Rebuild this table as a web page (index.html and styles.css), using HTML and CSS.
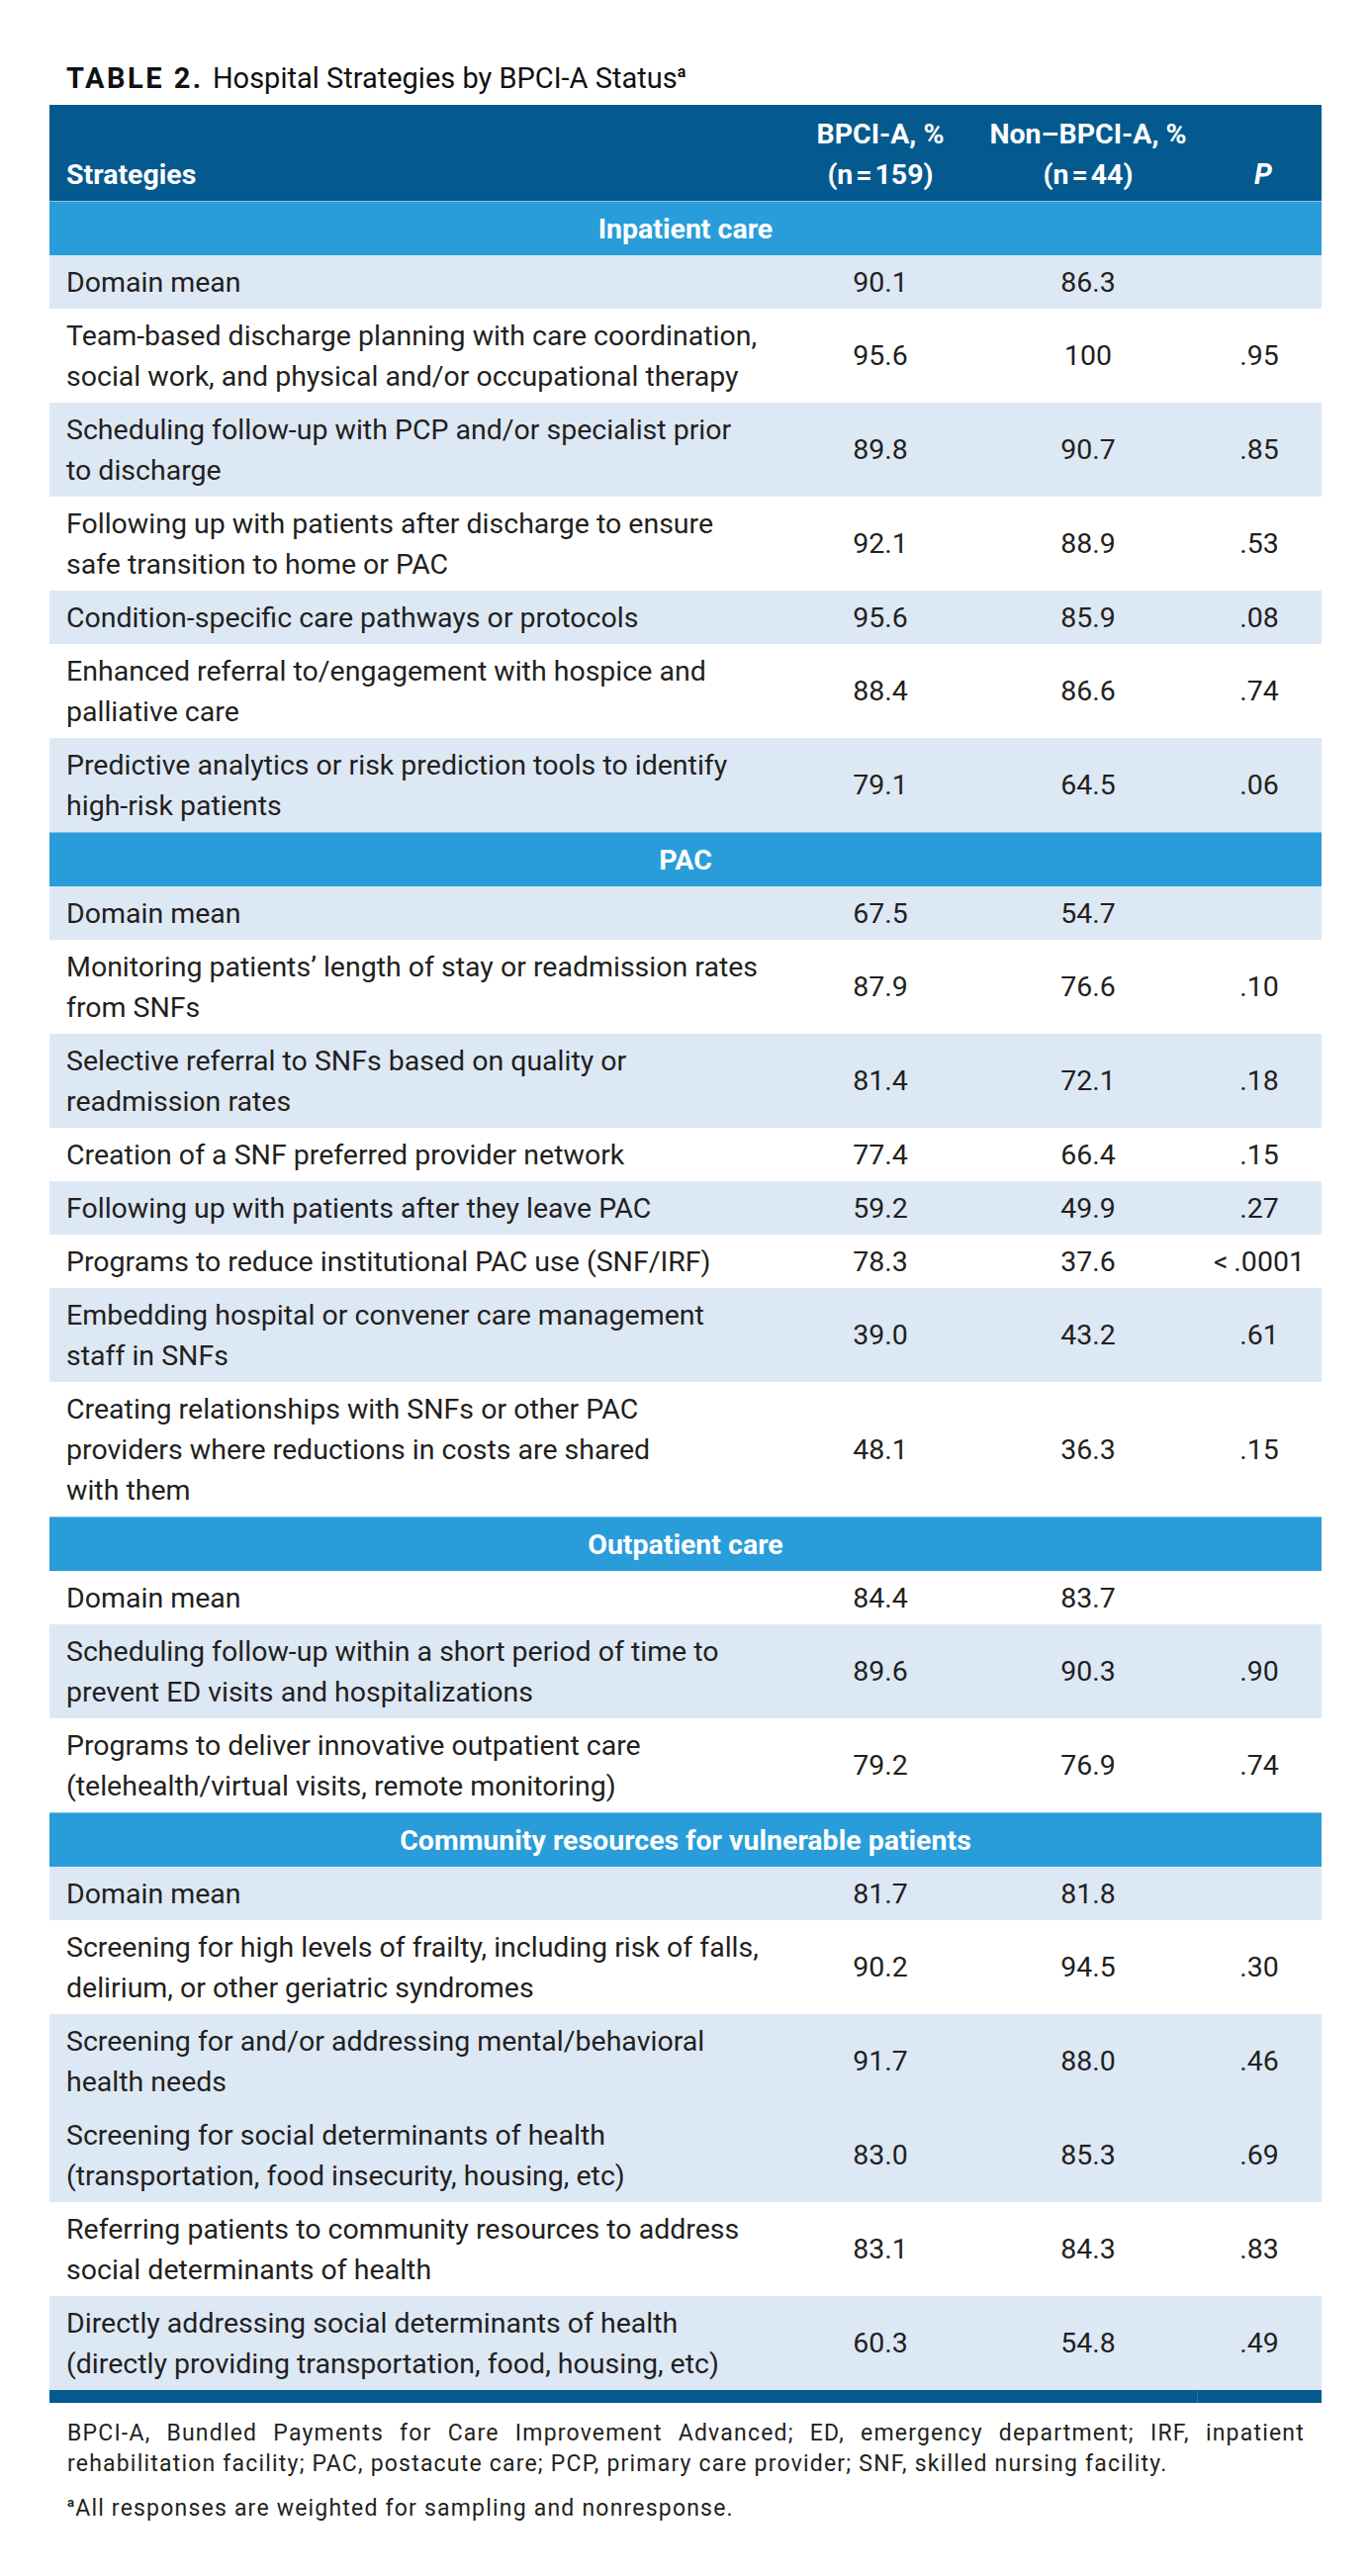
FILE: index.html
```html
<!DOCTYPE html>
<html lang="en">
<head>
<meta charset="utf-8">
<title>Table 2. Hospital Strategies by BPCI-A Status</title>
<link rel="stylesheet" href="styles.css">
</head>
<body>
<div class="page">
  <h1 class="title"><span class="label">TABLE 2.</span> Hospital Strategies by BPCI-A Status<sup>a</sup></h1>
  <table class="strat">
    <colgroup>
      <col class="c-name">
      <col class="c-bpci">
      <col class="c-non">
      <col class="c-p">
    </colgroup>
    <thead>
      <tr class="head">
        <th class="name">Strategies</th>
        <th class="num">BPCI-A, %<br>(n&#8202;=&#8202;159)</th>
        <th class="num">Non–BPCI-A, %<br>(n&#8202;=&#8202;44)</th>
        <th class="num p"><i>P</i></th>
      </tr>
    </thead>
    <tbody>
      <tr class="section"><td colspan="4">Inpatient care</td></tr>
      <tr class="alt"><td class="name">Domain mean</td><td class="num">90.1</td><td class="num">86.3</td><td class="num"></td></tr>
      <tr><td class="name">Team-based discharge planning with care coordination,<br>social work, and physical and/or occupational therapy</td><td class="num">95.6</td><td class="num">100</td><td class="num">.95</td></tr>
      <tr class="alt"><td class="name">Scheduling follow-up with PCP and/or specialist prior<br>to discharge</td><td class="num">89.8</td><td class="num">90.7</td><td class="num">.85</td></tr>
      <tr><td class="name">Following up with patients after discharge to ensure<br>safe transition to home or PAC</td><td class="num">92.1</td><td class="num">88.9</td><td class="num">.53</td></tr>
      <tr class="alt"><td class="name">Condition-specific care pathways or protocols</td><td class="num">95.6</td><td class="num">85.9</td><td class="num">.08</td></tr>
      <tr><td class="name">Enhanced referral to/engagement with hospice and<br>palliative care</td><td class="num">88.4</td><td class="num">86.6</td><td class="num">.74</td></tr>
      <tr class="alt"><td class="name">Predictive analytics or risk prediction tools to identify<br>high-risk patients</td><td class="num">79.1</td><td class="num">64.5</td><td class="num">.06</td></tr>

      <tr class="section"><td colspan="4">PAC</td></tr>
      <tr class="alt"><td class="name">Domain mean</td><td class="num">67.5</td><td class="num">54.7</td><td class="num"></td></tr>
      <tr><td class="name">Monitoring patients’ length of stay or readmission rates<br>from SNFs</td><td class="num">87.9</td><td class="num">76.6</td><td class="num">.10</td></tr>
      <tr class="alt"><td class="name">Selective referral to SNFs based on quality or<br>readmission rates</td><td class="num">81.4</td><td class="num">72.1</td><td class="num">.18</td></tr>
      <tr><td class="name">Creation of a SNF preferred provider network</td><td class="num">77.4</td><td class="num">66.4</td><td class="num">.15</td></tr>
      <tr class="alt"><td class="name">Following up with patients after they leave PAC</td><td class="num">59.2</td><td class="num">49.9</td><td class="num">.27</td></tr>
      <tr><td class="name">Programs to reduce institutional PAC use (SNF/IRF)</td><td class="num">78.3</td><td class="num">37.6</td><td class="num">&lt;&#8201;.0001</td></tr>
      <tr class="alt"><td class="name">Embedding hospital or convener care management<br>staff in SNFs</td><td class="num">39.0</td><td class="num">43.2</td><td class="num">.61</td></tr>
      <tr><td class="name">Creating relationships with SNFs or other PAC<br>providers where reductions in costs are shared<br>with them</td><td class="num">48.1</td><td class="num">36.3</td><td class="num">.15</td></tr>

      <tr class="section"><td colspan="4">Outpatient care</td></tr>
      <tr><td class="name">Domain mean</td><td class="num">84.4</td><td class="num">83.7</td><td class="num"></td></tr>
      <tr class="alt"><td class="name">Scheduling follow-up within a short period of time to<br>prevent ED visits and hospitalizations</td><td class="num">89.6</td><td class="num">90.3</td><td class="num">.90</td></tr>
      <tr><td class="name">Programs to deliver innovative outpatient care<br>(telehealth/virtual visits, remote monitoring)</td><td class="num">79.2</td><td class="num">76.9</td><td class="num">.74</td></tr>

      <tr class="section"><td colspan="4">Community resources for vulnerable patients</td></tr>
      <tr class="alt"><td class="name">Domain mean</td><td class="num">81.7</td><td class="num">81.8</td><td class="num"></td></tr>
      <tr><td class="name">Screening for high levels of frailty, including risk of falls,<br>delirium, or other geriatric syndromes</td><td class="num">90.2</td><td class="num">94.5</td><td class="num">.30</td></tr>
      <tr class="alt"><td class="name">Screening for and/or addressing mental/behavioral<br>health needs</td><td class="num">91.7</td><td class="num">88.0</td><td class="num">.46</td></tr>
      <tr class="alt"><td class="name">Screening for social determinants of health<br>(transportation, food insecurity, housing, etc)</td><td class="num">83.0</td><td class="num">85.3</td><td class="num">.69</td></tr>
      <tr><td class="name">Referring patients to community resources to address<br>social determinants of health</td><td class="num">83.1</td><td class="num">84.3</td><td class="num">.83</td></tr>
      <tr class="alt"><td class="name">Directly addressing social determinants of health<br>(directly providing transportation, food, housing, etc)</td><td class="num">60.3</td><td class="num">54.8</td><td class="num">.49</td></tr>
    </tbody>
    <tfoot>
      <tr class="endbar"><td></td><td></td><td></td><td class="last"></td></tr>
    </tfoot>
  </table>
  <div class="notes">
    <p><span class="jline">BPCI-A, Bundled Payments for Care Improvement Advanced; ED, emergency department; IRF, inpatient</span>rehabilitation facility; PAC, postacute care; PCP, primary care provider; SNF, skilled nursing facility.</p>
    <p class="fn"><sup>a</sup>All responses are weighted for sampling and nonresponse.</p>
  </div>
</div>
</body>
</html>
```

FILE: styles.css
```css
html, body {
  margin: 0;
  padding: 0;
  background: #ffffff;
}

body {
  font-family: Roboto, "Noto Sans", "Liberation Sans", sans-serif;
  color: #231f20;
}

.page {
  width: 1286px;
  padding: 61px 0 0 50px;
}

.title {
  margin: 0 0 9px 17px;
  font-size: 29px;
  line-height: 36px;
  font-weight: 400;
  color: #111;
}

.title .label {
  font-weight: 700;
  letter-spacing: 2.5px;
  margin-right: 2px;
}

.title sup {
  font-size: 16px;
  font-weight: 700;
  vertical-align: 11px;
  line-height: 0;
}

.strat {
  width: 1286px;
  border-collapse: collapse;
  table-layout: fixed;
  font-size: 28.5px;
  line-height: 41px;
}

.c-name { width: 740px; }
.c-bpci { width: 200px; }
.c-non { width: 220px; }
.c-p { width: 126px; }

.strat td, .strat th {
  padding: 6.5px 0;
  vertical-align: middle;
}

.strat .name {
  text-align: left;
  padding-left: 17px;
  padding-right: 0;
  white-space: nowrap;
}

.strat .num {
  text-align: center;
}

.head th {
  background: #045a8f;
  color: #ffffff;
  font-weight: 700;
  vertical-align: bottom;
  padding-top: 9px;
  padding-bottom: 6px;
}

.head .p {
  padding-left: 8px;
}

.section td {
  background: #299dd9;
  color: #ffffff;
  font-weight: 700;
  text-align: center;
  border-top: 1px solid #7cc3e8;
}

.alt td {
  background: #dde8f5;
}

.endbar td {
  height: 13px;
  padding: 0;
  background: #045a8f;
  line-height: 0;
  font-size: 0;
}

.endbar .last {
  border-left: 1px solid #2a6f9c;
}

.notes {
  margin-top: 15px;
  padding-left: 18px;
  width: 1251px;
  font-size: 23px;
  line-height: 31px;
  letter-spacing: 1.2px;
  color: #231f20;
}

.notes p {
  margin: 0;
}

.notes .jline {
  display: block;
  text-align: justify;
  text-align-last: justify;
}

.notes .fn {
  margin-top: 14px;
}

.notes sup {
  font-size: 13px;
  font-weight: 700;
  vertical-align: 9px;
  line-height: 0;
}
```
